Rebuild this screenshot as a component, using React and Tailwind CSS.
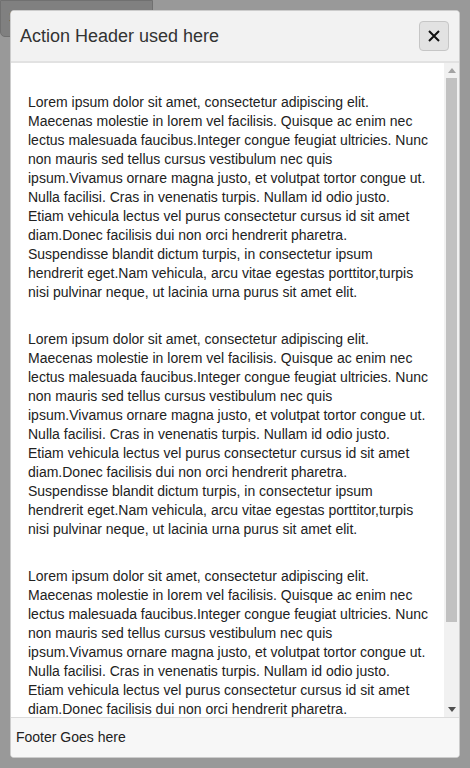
import React from 'react';

const lorem =
  'Lorem ipsum dolor sit amet, consectetur adipiscing elit. Maecenas molestie in lorem vel facilisis. Quisque ac enim nec lectus malesuada faucibus.Integer congue feugiat ultricies. Nunc non mauris sed tellus cursus vestibulum nec quis ipsum.Vivamus ornare magna justo, et volutpat tortor congue ut. Nulla facilisi. Cras in venenatis turpis. Nullam id odio justo. Etiam vehicula lectus vel purus consectetur cursus id sit amet diam.Donec facilisis dui non orci hendrerit pharetra. Suspendisse blandit dictum turpis, in consectetur ipsum hendrerit eget.Nam vehicula, arcu vitae egestas porttitor,turpis nisi pulvinar neque, ut lacinia urna purus sit amet elit.';

// drawn scrollbar, the browser here hides the native one
const ScrollTrack = () => (
  <div className="flex w-[15px] shrink-0 flex-col items-center bg-[#f1f1f1]">
    <div className="flex h-[15px] w-full items-center justify-center">
      <svg width="8" height="5" viewBox="0 0 8 5">
        <path d="M0 5 L4 0 L8 5 Z" fill="#a3a3a3" />
      </svg>
    </div>
    <div className="h-[544px] w-[11px] bg-[#c1c1c1]" />
    <div className="flex-1" />
    <div className="flex h-[15px] w-full items-center justify-center">
      <svg width="8" height="5" viewBox="0 0 8 5">
        <path d="M0 0 L8 0 L4 5 Z" fill="#505050" />
      </svg>
    </div>
  </div>
);

const App = () => {
  return (
    <div className="relative h-[768px] w-full bg-white font-['Liberation_Sans',Arial,sans-serif]">
      {/* page behind the modal */}
      <button className="rounded-b-[5px] border border-[#bbb] bg-[#d6d6d6] px-[8px] pt-[5px] pb-[6px] text-[16px] text-[#222]">
        Show modal dialog
      </button>

      {/* overlay */}
      <div className="absolute inset-0 bg-black/40">
        <div className="absolute top-[10px] left-[10px] right-[10px] bottom-[10px] flex flex-col overflow-hidden rounded-[4px] border border-[#ccc] bg-white">
          {/* Header */}
          <div className="flex h-[52px] shrink-0 items-center justify-between border-b-2 border-[#e2e2e2] bg-[#f2f2f2] pl-[9px] pr-[10px]">
            <h2 className="text-[18px] text-[#333]">Action Header used here</h2>
            <button className="flex h-[30px] w-[30px] items-center justify-center rounded-[4px] border border-[#c6c6c6] bg-[#e2e2e2]">
              <svg width="14" height="14" viewBox="0 0 14 14" fill="none" stroke="#111" strokeWidth="2">
                <path d="M2 2 L12 12 M12 2 L2 12" />
              </svg>
            </button>
          </div>

          {/* Body */}
          <div className="flex min-h-0 flex-1">
            <div className="min-w-0 flex-1 overflow-hidden pl-[17px] pr-[15px] pt-[30px] pb-[30px]">
              <div className="space-y-7">
                {[0, 1, 2].map((i) => (
                  <p key={i} className="text-[14px] leading-[19px] text-[#222]">
                    {lorem}
                  </p>
                ))}
              </div>
            </div>
            <ScrollTrack />
          </div>

          {/* Footer */}
          <div className="flex h-[40px] shrink-0 items-center border-t border-[#dcdcdc] bg-[#f7f7f7] px-[5px]">
            <span className="text-[14px] text-[#222]">Footer Goes here</span>
          </div>
        </div>
      </div>
    </div>
  );
};

export default App;
